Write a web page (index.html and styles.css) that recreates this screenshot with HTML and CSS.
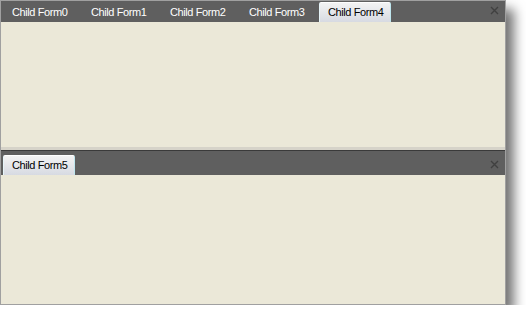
FILE: index.html
```html
<!DOCTYPE html>
<html>
<head>
<meta charset="utf-8">
<link rel="stylesheet" href="styles.css">
</head>
<body>
<div class="window">
  <div class="pane pane-top">
    <div class="strip strip-top">
      <div class="tabs">
        <div class="tab">Child Form0</div>
        <div class="tab">Child Form1</div>
        <div class="tab">Child Form2</div>
        <div class="tab">Child Form3</div>
        <div class="tab active">Child Form4</div>
      </div>
      <svg class="close" width="9" height="9" viewBox="0 0 9 9"><path d="M1 1L8 8M8 1L1 8" stroke="#404040" stroke-width="1.4"/></svg>
    </div>
    <div class="content content-top"></div>
  </div>
  <div class="splitter"></div>
  <div class="pane pane-bottom">
    <div class="strip strip-bottom">
      <div class="tabs">
        <div class="tab active">Child Form5</div>
      </div>
      <svg class="close" width="9" height="9" viewBox="0 0 9 9"><path d="M1 1L8 8M8 1L1 8" stroke="#404040" stroke-width="1.4"/></svg>
    </div>
    <div class="content content-bottom"></div>
  </div>
</div>
</body>
</html>
```
FILE: styles.css
```css
html, body {
  margin: 0;
  padding: 0;
  background: #ffffff;
}
.window {
  box-sizing: border-box;
  width: 506px;
  height: 305px;
  border: 1px solid #a0a0a0;
  background: #ebe8d8;
  display: flex;
  flex-direction: column;
  box-shadow: 8px 9px 11px rgba(0, 0, 0, 0.55);
  font-family: "Liberation Sans", Arial, sans-serif;
  font-size: 11px;
  letter-spacing: -0.4px;
}
.pane {
  display: flex;
  flex-direction: column;
}
.pane-top {
  height: 146px;
}
.pane-bottom {
  flex: 1;
}
.strip {
  background: #5f5f5f;
  display: flex;
  align-items: flex-end;
  justify-content: space-between;
  padding-left: 2px;
  padding-right: 6px;
}
.strip-top {
  height: 21px;
}
.strip-bottom {
  height: 24px;
  border-top: 1px solid #3a3a3a;
}
.tabs {
  display: flex;
  gap: 7px;
}
.tab {
  box-sizing: border-box;
  width: 72px;
  height: 20px;
  padding-left: 9px;
  line-height: 20px;
  color: #ffffff;
  white-space: nowrap;
}
.tab.active {
  color: #000000;
  padding-left: 8px;
  border: 1px solid #ffffff;
  border-right-color: #bfe6ee;
  border-left-color: #e6f4f8;
  border-bottom: none;
  border-radius: 2px 2px 0 0;
  background: linear-gradient(#f3f3f3, #d7dae2);
  line-height: 18px;
}
.close {
  align-self: center;
  margin-top: -2px;
}
.strip-bottom .close {
  margin-top: 2px;
}
.content {
  flex: 1;
  background: #ebe8d8;
}
.splitter {
  height: 3px;
  background: #d6d3c9;
}
```
